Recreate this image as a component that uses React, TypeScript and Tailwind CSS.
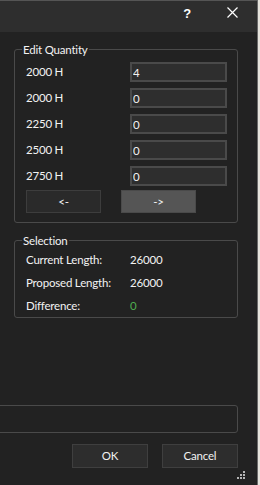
import React from 'react';

const rows = [
  { label: '2000 H', value: '4' },
  { label: '2000 H', value: '0' },
  { label: '2250 H', value: '0' },
  { label: '2500 H', value: '0' },
  { label: '2750 H', value: '0' },
];

const selection = [
  { label: 'Current Length:', value: '26000', color: 'text-[#f2f2f2]' },
  { label: 'Proposed Length:', value: '26000', color: 'text-[#f2f2f2]' },
  { label: 'Difference:', value: '0', color: 'text-[#4fae4f]' },
];

function SizeGrip() {
  return (
    <svg width="10" height="10" viewBox="0 0 10 10" className="block">
      <rect x="6" y="0" width="2" height="2" fill="#b5b5b5" />
      <rect x="3" y="3" width="2" height="2" fill="#b5b5b5" />
      <rect x="6" y="3" width="2" height="2" fill="#b5b5b5" />
      <rect x="0" y="6" width="2" height="2" fill="#b5b5b5" />
      <rect x="3" y="6" width="2" height="2" fill="#b5b5b5" />
      <rect x="6" y="6" width="2" height="2" fill="#b5b5b5" />
    </svg>
  );
}

export default function App() {
  const [page, setPage] = React.useState(1);

  return (
    <div
      className="w-[260px] h-[485px] flex bg-[#222222] text-[11.5px] tracking-[-0.2px] text-[#f2f2f2] overflow-hidden"
      style={{ fontFamily: 'Lato, "Liberation Sans", sans-serif' }}
    >
      <div className="flex-1 flex flex-col min-w-0">
        <div className="h-[32px] shrink-0 bg-[#2e2e2e] border-t border-[#555] flex items-start justify-end">
          <span
            className="mt-[5px] mr-[36px] text-[13px] font-bold text-white leading-[16px]"
            style={{ fontFamily: '"Liberation Sans", sans-serif' }}
          >
            ?
          </span>
          <svg width="11" height="11" viewBox="0 0 11 11" className="mt-[6px] mr-[19px]">
            <path d="M0.5 0.5 L10.5 10.5 M10.5 0.5 L0.5 10.5" stroke="#ffffff" strokeWidth="1.2" />
          </svg>
        </div>

        <div className="flex-1 flex flex-col pl-[14px] pr-[19px]">
          <fieldset className="mt-[11px] border border-[#4a4a4a] rounded-[3px] px-0 pb-[9px]">
            <legend className="ml-[7px] px-[1px] leading-[13px]">Edit Quantity</legend>
            <div className="pl-[11px] pt-[6px] flex flex-col gap-[6px]">
              {rows.map((row, i) => (
                <div key={i} className="h-[20px] flex items-center">
                  <span className="w-[104px]">{row.label}</span>
                  <input
                    defaultValue={row.value}
                    className="w-[97px] h-[20px] bg-[#2e2e2e] border-2 border-[#4a4a4a] px-[1px] text-[#f2f2f2] outline-none"
                  />
                </div>
              ))}
              <div className="flex gap-[20px] mt-[-2px]">
                <button
                  type="button"
                  onClick={() => setPage(0)}
                  className={`w-[75px] h-[23px] border ${page === 0 ? 'bg-[#555555] border-[#4a4a4a]' : 'bg-[#2a2a2a] border-[#3d3d3d]'}`}
                >
                  &lt;-
                </button>
                <button
                  type="button"
                  onClick={() => setPage(1)}
                  className={`w-[75px] h-[23px] border ${page === 1 ? 'bg-[#555555] border-[#4a4a4a]' : 'bg-[#2a2a2a] border-[#3d3d3d]'}`}
                >
                  -&gt;
                </button>
              </div>
            </div>
          </fieldset>

          <fieldset className="mt-[11px] border border-[#4a4a4a] rounded-[3px] px-0 pb-0">
            <legend className="ml-[7px] px-[1px] leading-[13px]">Selection</legend>
            <div className="pl-[11px] pt-[1px]">
              {selection.map((row) => (
                <div key={row.label} className="h-[23px] flex items-center">
                  <span className="w-[104px]">{row.label}</span>
                  <span className={row.color}>{row.value}</span>
                </div>
              ))}
            </div>
          </fieldset>

          <div className="flex-1" />

          <div className="ml-[-24px] h-[28px] border border-[#4a4a4a] rounded-r-[3px]" />

          <div className="mt-[11px] flex justify-end gap-[14px]">
            <button type="button" className="w-[76px] h-[24px] bg-[#2d2d2d] border border-[#3f3f3f]">
              OK
            </button>
            <button type="button" className="w-[76px] h-[24px] bg-[#2d2d2d] border border-[#3f3f3f]">
              Cancel
            </button>
          </div>

          <div className="h-[17px] flex justify-end items-end pb-[4px] mr-[-9px]">
            <SizeGrip />
          </div>
        </div>
      </div>
      <div className="w-[1px] bg-[#6a6a6a]" />
      <div className="w-[2px] bg-[#e6e3dc]" />
    </div>
  );
}
